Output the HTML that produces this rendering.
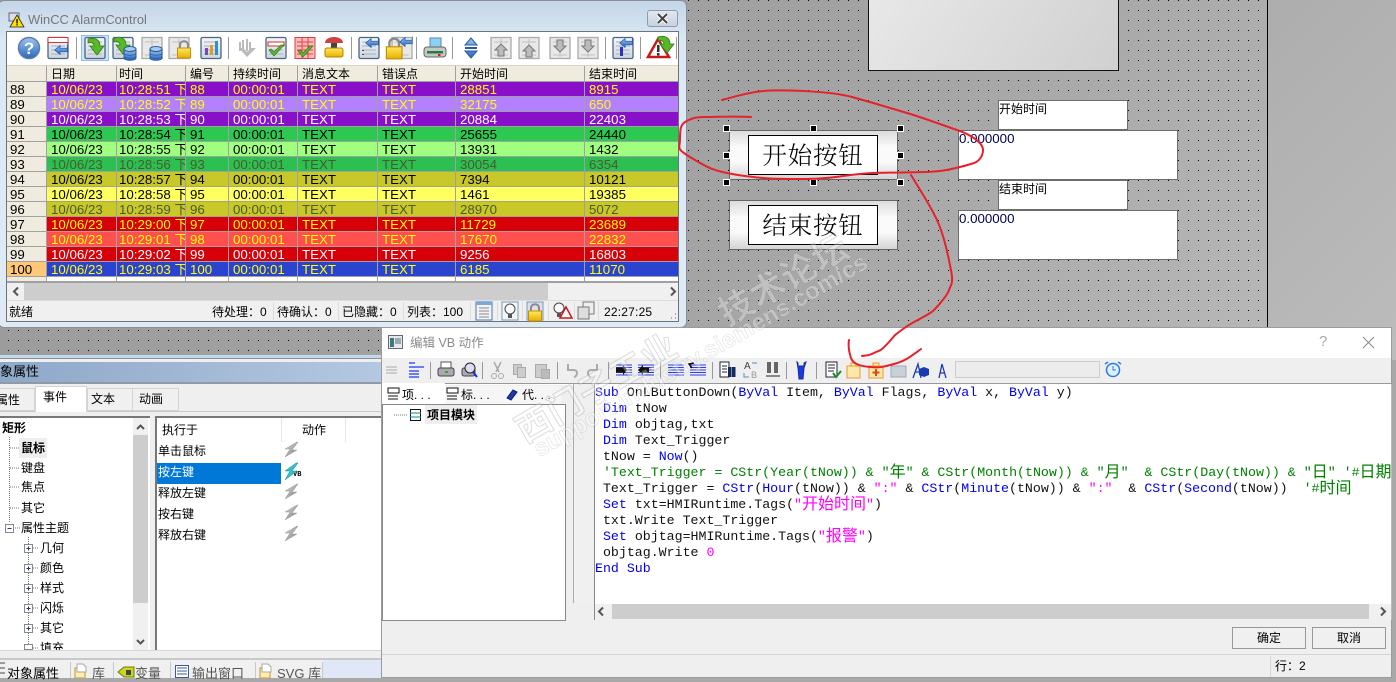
<!DOCTYPE html>
<html><head><meta charset="utf-8"><style>
html,body{margin:0;padding:0;background:#a8a8a8}
body{position:relative;width:1396px;height:678px;overflow:hidden;font:12px "Liberation Sans","WenQuanYi Zen Hei","Noto Sans CJK SC",sans-serif;color:#000}
.a{position:absolute}
.t{position:absolute;white-space:nowrap;line-height:16px}
.row{position:absolute;left:7px;width:671px;height:15px;display:grid;grid-template-columns:40px 70px 69px 43px 69px 80px 78px 129px 93px;font-size:13.3px;line-height:15px}
.row span{overflow:hidden;white-space:nowrap;padding-left:4px;border-right:1px solid #a0a0a0;border-bottom:1px solid #a0a0a0;box-sizing:border-box}
.row span:first-child{background:#efebde;color:#000;padding-left:3px}
.row span:nth-child(3){padding-left:2px}
.row span:last-child{border-right:0}
.hd{font-size:12px;background:#efebde;top:66px;height:16px;line-height:16px}
.hd span{padding-left:4px}
.w{color:#fff}.y{color:#ff0}.b{color:#000}.g{color:#4a5a30}
.code{position:absolute;left:595px;top:384px;width:796px;height:220px;overflow:hidden;background:#fff;font:13.28px/16px "Liberation Mono",monospace;color:#111}
.code div{position:absolute;left:0;margin-top:1px;white-space:pre;height:16px}
.code i{font-style:normal;color:#0000ee}.code u{text-decoration:none;color:#ff00ff}.code em{font-style:normal;color:#008000}
.code b{font:16px/0 "WenQuanYi Zen Hei","Noto Sans CJK SC",sans-serif;vertical-align:-1px}
.btn{position:absolute;width:72px;height:20px;border:1px solid #999;background:#f0f0f0;text-align:center;line-height:20px;font-size:12px}
.cbtn{position:absolute;box-sizing:border-box;width:169px;height:50px;left:729px;border:1px solid #666;background:linear-gradient(#dcdcdc,#fafafa 35%,#fafafa 65%,#d4d4d4)}
.cin{position:absolute;left:18px;top:4px;width:130px;height:40px;box-sizing:border-box;border:1px solid #000;background:#fff;text-align:center;font:300 24.5px/37px "Noto Serif CJK SC",serif;letter-spacing:.8px}
.box{position:absolute;box-sizing:border-box;background:#fff;border:1px solid #6c6c6c}
.h{position:absolute;width:5px;height:5px;background:#000;border:1px solid #fff}
</style></head><body>

<!-- design canvas -->
<div class="a" style="left:0;top:0;width:1396px;height:360px;background:linear-gradient(135deg,#989898,#a4a4a4 55%,#bcbcbc)"></div>
<svg class="a" style="left:0;top:0" width="1268" height="360"><defs><pattern id="d" x="8" y="0" width="10" height="10" patternUnits="userSpaceOnUse"><rect width="1" height="1" fill="#000"/></pattern></defs><rect width="1268" height="356" fill="url(#d)"/></svg>
<div class="a" style="left:1267px;top:0;width:1px;height:328px;background:#000"></div>
<div class="a" style="left:868px;top:-2px;width:251px;height:73px;box-sizing:border-box;border:1px solid #111;background:linear-gradient(125deg,#e8e8e8,#d0d0d0)"></div>

<div class="cbtn" style="top:130px"><div class="cin">开始按钮</div></div>
<div class="cbtn" style="top:200px"><div class="cin">结束按钮</div></div>
<div class="h" style="left:723px;top:125px"></div><div class="h" style="left:810px;top:125px"></div><div class="h" style="left:897px;top:125px"></div>
<div class="h" style="left:723px;top:152px"></div><div class="h" style="left:897px;top:152px"></div>
<div class="h" style="left:723px;top:179px"></div><div class="h" style="left:810px;top:179px"></div><div class="h" style="left:897px;top:179px"></div>

<div class="box" style="left:998px;top:100px;width:130px;height:30px"><span class="t" style="left:0;top:0">开始时间</span></div>
<div class="box" style="left:958px;top:130px;width:220px;height:50px"><span class="t" style="left:0;top:0;font-size:13.3px;color:#000050">0.000000</span></div>
<div class="box" style="left:998px;top:180px;width:130px;height:30px"><span class="t" style="left:0;top:0">结束时间</span></div>
<div class="box" style="left:958px;top:210px;width:220px;height:50px"><span class="t" style="left:0;top:0;font-size:13.3px;color:#000050">0.000000</span></div>

<!-- alarm window -->
<div class="a" style="left:-2px;top:0;width:689px;height:328px;box-sizing:border-box;border:1px solid #8a8f95;border-radius:6px;background:linear-gradient(#c4d6e8,#dbe8f4 12%,#dfeaf5)"></div>
<svg class="a" style="left:8px;top:12px" width="18" height="16"><rect x="1" y="1" width="10" height="8" fill="#dde" stroke="#667"/><path d="M9 3L16 15H2Z" fill="#ffe000" stroke="#222" stroke-width=".8"/><rect x="8.4" y="7" width="1.3" height="4.5"/><rect x="8.4" y="12.2" width="1.3" height="1.3"/></svg>
<div class="t" style="left:28px;top:12px;font-size:12.9px;color:#777">WinCC AlarmControl</div>
<div class="a" style="left:647px;top:10px;width:31px;height:17px;box-sizing:border-box;border:1px solid #8b9bb0;border-radius:3px;background:linear-gradient(#e2e8ef,#c6d2de)"></div>
<svg class="a" style="left:655px;top:12px" width="15" height="13"><path d="M3 2L12 11M12 2L3 11" stroke="#fff" stroke-width="4"/><path d="M3 2L12 11M12 2L3 11" stroke="#444" stroke-width="2"/></svg>
<div class="a" style="left:6px;top:31px;width:673px;height:291px;box-sizing:border-box;border:1px solid #6e7378;background:#fff"></div>
<div class="a" style="left:7px;top:65px;width:671px;height:1px;background:#d8d4c8"></div>
<div class="a" style="left:81px;top:35px;width:28px;height:26px;box-sizing:border-box;background:#cfe4f8;border:1px solid #8fbfe8"></div>

<div class="row hd"><span></span><span>日期</span><span>时间</span><span>编号</span><span>持续时间</span><span>消息文本</span><span>错误点</span><span>开始时间</span><span>结束时间</span></div>
<div class="row y" style="top:82px;background:#8810c8"><span>88</span><span>10/06/23</span><span>10:28:51 下午</span><span>88</span><span>00:00:01</span><span>TEXT</span><span>TEXT</span><span>28851</span><span>8915</span></div>
<div class="row y" style="top:97px;background:#b380ff"><span>89</span><span>10/06/23</span><span>10:28:52 下午</span><span>89</span><span>00:00:01</span><span>TEXT</span><span>TEXT</span><span>32175</span><span>650</span></div>
<div class="row w" style="top:112px;background:#8810c8"><span>90</span><span>10/06/23</span><span>10:28:53 下午</span><span>90</span><span>00:00:01</span><span>TEXT</span><span>TEXT</span><span>20884</span><span>22403</span></div>
<div class="row b" style="top:127px;background:#2cc850"><span>91</span><span>10/06/23</span><span>10:28:54 下午</span><span>91</span><span>00:00:01</span><span>TEXT</span><span>TEXT</span><span>25655</span><span>24440</span></div>
<div class="row b" style="top:142px;background:#a0ff80"><span>92</span><span>10/06/23</span><span>10:28:55 下午</span><span>92</span><span>00:00:01</span><span>TEXT</span><span>TEXT</span><span>13931</span><span>1432</span></div>
<div class="row g" style="top:157px;background:#2cc050"><span>93</span><span>10/06/23</span><span>10:28:56 下午</span><span>93</span><span>00:00:01</span><span>TEXT</span><span>TEXT</span><span>30054</span><span>6354</span></div>
<div class="row b" style="top:172px;background:#c8c828"><span>94</span><span>10/06/23</span><span>10:28:57 下午</span><span>94</span><span>00:00:01</span><span>TEXT</span><span>TEXT</span><span>7394</span><span>10121</span></div>
<div class="row b" style="top:187px;background:#ffff60"><span>95</span><span>10/06/23</span><span>10:28:58 下午</span><span>95</span><span>00:00:01</span><span>TEXT</span><span>TEXT</span><span>1461</span><span>19385</span></div>
<div class="row g" style="top:202px;background:#c8c828"><span>96</span><span>10/06/23</span><span>10:28:59 下午</span><span>96</span><span>00:00:01</span><span>TEXT</span><span>TEXT</span><span>28970</span><span>5072</span></div>
<div class="row y" style="top:217px;background:#d80008"><span>97</span><span>10/06/23</span><span>10:29:00 下午</span><span>97</span><span>00:00:01</span><span>TEXT</span><span>TEXT</span><span>11729</span><span>23689</span></div>
<div class="row y" style="top:232px;background:#ff5050"><span>98</span><span>10/06/23</span><span>10:29:01 下午</span><span>98</span><span>00:00:01</span><span>TEXT</span><span>TEXT</span><span>17670</span><span>22832</span></div>
<div class="row w" style="top:247px;background:#d80008"><span>99</span><span>10/06/23</span><span>10:29:02 下午</span><span>99</span><span>00:00:01</span><span>TEXT</span><span>TEXT</span><span>9256</span><span>16803</span></div>
<div class="row y" style="top:262px;background:#2a44d0"><span style="background:#ffc878">100</span><span>10/06/23</span><span>10:29:03 下午</span><span>100</span><span>00:00:01</span><span>TEXT</span><span>TEXT</span><span>6185</span><span>11070</span></div>
<div class="row b" style="top:277px;height:5px;background:#fff"><span></span><span></span><span></span><span></span><span></span><span></span><span></span><span></span><span></span></div>

<div class="a" style="left:7px;top:282px;width:671px;height:18px;background:#f0f0f0;border-top:1px solid #a0a0a0;box-sizing:border-box"></div>
<div class="a" style="left:24px;top:283px;width:524px;height:17px;background:#cdcdcd"></div>
<svg class="a" style="left:7px;top:283px" width="671" height="17"><path d="M11 4.500L7 8.500L11 12.500M664 4.500L668 8.500L664 12.500" fill="none" stroke="#555" stroke-width="2"/></svg>
<div class="a" style="left:7px;top:300px;width:671px;height:21px;background:#f0f0f0;border-top:1px solid #ddd;box-sizing:border-box"></div>
<div class="t" style="left:9px;top:304px">就绪</div>
<div class="t" style="left:212px;top:304px">待处理：0</div>
<div class="t" style="left:277px;top:304px">待确认：0</div>
<div class="t" style="left:342px;top:304px">已隐藏：0</div>
<div class="t" style="left:407px;top:304px">列表：100</div>
<div class="t" style="left:604px;top:304px;letter-spacing:.2px">22:27:25</div>

<!-- lower-left properties panel -->
<div class="a" style="left:0;top:355px;width:381px;height:323px;background:#efefef"></div>
<div class="a" style="left:0;top:355px;width:381px;height:3px;background:#c4d8ec;border-bottom:1px solid #8a9098"></div>
<div class="a" style="left:0;top:362px;width:381px;height:20px;background:linear-gradient(90deg,#8ea8c8,#b4c8e0)"></div>
<div class="a" style="left:0;top:382px;width:381px;height:2px;background:#8f9aa8"></div>
<div class="t" style="left:0;top:364px;font-size:13px;color:#000">象属性</div>
<div class="a" style="left:0;top:411px;width:381px;height:1px;background:#c8c8c8"></div>
<div class="a" style="left:-2px;top:388px;width:37px;height:23px;box-sizing:border-box;border:1px solid #d4d4d4;background:#f0f0f0"></div>
<div class="a" style="left:87px;top:388px;width:46px;height:23px;box-sizing:border-box;border:1px solid #d4d4d4;background:#f0f0f0"></div>
<div class="a" style="left:132px;top:388px;width:47px;height:23px;box-sizing:border-box;border:1px solid #d4d4d4;background:#f0f0f0"></div>
<div class="a" style="left:35px;top:386px;width:52px;height:26px;box-sizing:border-box;border:1px solid #d4d4d4;border-bottom:0;background:#fff"></div>
<div class="t" style="left:-4px;top:392px;width:36px">属性</div>
<div class="t" style="left:43px;top:389px">事件</div>
<div class="t" style="left:91px;top:391px">文本</div>
<div class="t" style="left:139px;top:391px">动画</div>

<div class="a" style="left:0;top:416px;width:150px;height:234px;background:#fff;border-top:2px solid #777;box-sizing:border-box"></div>
<div class="a" style="left:155px;top:416px;width:226px;height:234px;background:#fff;border-top:2px solid #777;border-left:2px solid #777;box-sizing:border-box"></div>
<div class="a" style="left:133px;top:418px;width:15px;height:232px;background:#f0f0f0"></div>
<div class="a" style="left:133px;top:435px;width:15px;height:168px;background:#cdcdcd"></div>
<div class="a" style="left:19px;top:438px;width:28px;height:20px;background:#eee"></div>
<div class="a" style="left:157px;top:463px;width:124px;height:21px;background:#0078d7"></div>
<div class="a" style="left:281px;top:418px;width:1px;height:24px;background:#e4e4e4"></div>
<div class="a" style="left:345px;top:418px;width:1px;height:24px;background:#e4e4e4"></div>
<div class="a" style="left:0;top:650px;width:381px;height:1px;background:#d8d8d8"></div>
<div class="a" style="left:0;top:658px;width:381px;height:2px;background:#c8c8c8"></div>

<div class="a" style="left:0;top:418px;width:133px;height:232px;overflow:hidden">
<div class="t" style="left:2px;top:2px;font-weight:bold">矩形</div>
<div class="t" style="left:21px;top:22px;font-weight:bold">鼠标</div>
<div class="t" style="left:21px;top:42px">键盘</div>
<div class="t" style="left:21px;top:61px">焦点</div>
<div class="t" style="left:21px;top:82px">其它</div>
<div class="t" style="left:21px;top:102px">属性主题</div>
<div class="t" style="left:40px;top:122px">几何</div>
<div class="t" style="left:40px;top:142px">颜色</div>
<div class="t" style="left:40px;top:162px">样式</div>
<div class="t" style="left:40px;top:182px">闪烁</div>
<div class="t" style="left:40px;top:202px">其它</div>
<div class="t" style="left:40px;top:222px">填充</div>
</div>
<div class="t" style="left:162px;top:422px">执行于</div>
<div class="t" style="left:302px;top:422px">动作</div>
<div class="t" style="left:158px;top:443px">单击鼠标</div>
<div class="t" style="left:158px;top:464px;color:#fff">按左键</div>
<div class="t" style="left:158px;top:485px">释放左键</div>
<div class="t" style="left:158px;top:506px">按右键</div>
<div class="t" style="left:158px;top:527px">释放右键</div>
<div class="t" style="left:293px;top:467px;font:bold 7px/16px 'Liberation Mono',monospace">VB</div>

<!-- bottom tabs -->
<div class="a" style="left:0;top:660px;width:381px;height:18px;background:#f0f0f0"></div>
<div class="a" style="left:323px;top:660px;width:58px;height:18px;background:#e0e8f8"></div>
<div class="t" style="left:7px;top:666px;font-size:13px">对象属性</div>
<div class="t" style="left:92px;top:666px;font-size:13px;color:#555">库</div>
<div class="t" style="left:135px;top:666px;font-size:13px;color:#555">变量</div>
<div class="t" style="left:192px;top:666px;font-size:13px;color:#555">输出窗口</div>
<div class="t" style="left:277px;top:666px;font-size:13px;color:#555">SVG 库</div>

<!-- VB dialog -->
<div class="a" style="left:381px;top:327px;width:1011px;height:351px;box-sizing:border-box;border:1px solid #9a9aa0;background:#efefef"></div>
<div class="a" style="left:382px;top:328px;width:1009px;height:30px;background:#fff"></div>
<div class="a" style="left:382px;top:383px;width:1009px;height:1px;background:#999"></div>
<div class="a" style="left:382px;top:384px;width:1009px;height:1px;background:#fff"></div>
<svg class="a" style="left:388px;top:335px" width="16" height="15"><rect x=".5" y=".5" width="14" height="13" fill="#e8e8e8" stroke="#667"/><rect x="2" y="3" width="4" height="9" fill="#3a7a7a"/><rect x="7" y="3" width="6" height="6" fill="#9ab"/></svg>
<div class="t" style="left:410px;top:335px;color:#8a8a8a;font-size:12.5px">编辑 VB 动作</div>
<div class="t" style="left:1319px;top:334px;font-size:15px;color:#aaa">?</div>
<svg class="a" style="left:1362px;top:336px" width="13" height="13"><path d="M1 1L12 12M12 1L1 12" stroke="#888"/></svg>
<div class="a" style="left:955px;top:361px;width:145px;height:17px;box-sizing:border-box;border:1px solid #ccc;background:#ececec"></div>

<div class="a" style="left:382px;top:383px;width:63px;height:21px;background:#fff"></div>
<div class="a" style="left:445px;top:386px;width:58px;height:18px;background:#f6f6f6;border-right:1px solid #ddd"></div>
<div class="a" style="left:503px;top:386px;width:58px;height:18px;background:#f6f6f6"></div>
<div class="t" style="left:402px;top:387px;font-size:12px">项. . .</div>
<div class="t" style="left:461px;top:387px;font-size:12px">标. . .</div>
<div class="t" style="left:522px;top:387px;font-size:12px">代. . .</div>
<div class="a" style="left:382px;top:404px;width:184px;height:217px;box-sizing:border-box;border:1px solid #888;background:#fff"></div>
<div class="a" style="left:425px;top:405px;width:52px;height:19px;background:#eee"></div>
<div class="t" style="left:427px;top:407px;font-weight:bold">项目模块</div>
<div class="a" style="left:573px;top:384px;width:21px;height:219px;background:#f0f0f0;border-left:1px solid #aaa;box-sizing:border-box"></div>
<div class="a" style="left:594px;top:384px;width:1px;height:236px;background:#888"></div>

<div class="code">
<div style="top:0"><i>Sub</i> OnLButtonDown(<i>ByVal</i> Item, <i>ByVal</i> Flags, <i>ByVal</i> x, <i>ByVal</i> y)</div>
<div style="top:16px"> <i>Dim</i> tNow</div>
<div style="top:32px"> <i>Dim</i> objtag,txt</div>
<div style="top:48px"> <i>Dim</i> Text_Trigger</div>
<div style="top:64px"> tNow = <i>Now</i>()</div>
<div style="top:80px"> <em>'Text_Trigger = CStr(Year(tNow)) &amp; "<b>年</b>" &amp; CStr(Month(tNow)) &amp; "<b>月</b>"  &amp; CStr(Day(tNow)) &amp; "<b>日</b>" '#<b>日期</b></em></div>
<div style="top:96px"> Text_Trigger = <i>CStr</i>(<i>Hour</i>(tNow)) &amp; <u>":"</u> &amp; <i>CStr</i>(<i>Minute</i>(tNow)) &amp; <u>":"</u>  &amp; <i>CStr</i>(<i>Second</i>(tNow))  <em>'#<b>时间</b></em></div>
<div style="top:112px"> <i>Set</i> txt=HMIRuntime.Tags(<u>"<b>开始时间</b>"</u>)</div>
<div style="top:128px"> txt.Write Text_Trigger</div>
<div style="top:144px"> <i>Set</i> objtag=HMIRuntime.Tags(<u>"<b>报警</b>"</u>)</div>
<div style="top:160px"> objtag.Write <u>0</u></div>
<div style="top:176px"><i>End Sub</i></div>
</div>
<div class="a" style="left:595px;top:604px;width:796px;height:16px;background:#f0f0f0"></div>
<div class="a" style="left:612px;top:604px;width:757px;height:15px;background:#cdcdcd"></div>
<svg class="a" style="left:595px;top:604px" width="796" height="16"><path d="M8 3.500L4 7.500L8 11.500M786 3.500L790 7.500L786 11.500" fill="none" stroke="#555" stroke-width="2"/></svg>
<div class="a" style="left:1391px;top:384px;width:1px;height:236px;background:#bbb"></div>
<div class="btn" style="left:1232px;top:627px">确定</div>
<div class="btn" style="left:1312px;top:627px">取消</div>
<div class="a" style="left:382px;top:654px;width:1009px;height:1px;background:#d4d4d4"></div>
<div class="a" style="left:1270px;top:656px;width:1px;height:21px;background:#d4d4d4"></div>
<div class="t" style="left:1275px;top:658px">行：2</div>

<!-- icons and tree lines -->
<svg class="a" style="left:0;top:0;pointer-events:none" width="1396" height="678" viewBox="0 0 1396 678">
<defs>
<linearGradient id="gd" x1="0" y1="0" x2="0" y2="1"><stop offset="0" stop-color="#f4f6f9"/><stop offset="1" stop-color="#cfd6de"/></linearGradient>
<linearGradient id="gy" x1="0" y1="0" x2="0" y2="1"><stop offset="0" stop-color="#ffe860"/><stop offset="1" stop-color="#e8b000"/></linearGradient>
<linearGradient id="gb" x1="0" y1="0" x2="0" y2="1"><stop offset="0" stop-color="#9cc4f0"/><stop offset="1" stop-color="#2a68c0"/></linearGradient>
<linearGradient id="gs" x1="0" y1="0" x2="1" y2="1"><stop offset="0" stop-color="#e0e0e0"/><stop offset="1" stop-color="#777"/></linearGradient>
<g id="doc"><rect x="-10" y="-10.500" width="20" height="21" rx="1.500" fill="url(#gd)" stroke="#4a6484" stroke-width="1.300"/><path d="M-7-6H7M-7-2H7M-7 2H7M-7 6H7" stroke="#a8b0ba"/></g>
<g id="gdoc"><rect x="-10" y="-10.500" width="20" height="21" fill="#e8e8e8" stroke="#aaa" stroke-width="1.300"/><path d="M-7-6H7M-7 7H7M0-9V9" stroke="#c0c0c0"/></g>
<path id="ga" d="M-7-9C-1-11 5-9 5-2H9L2 7-5-2H-1C-1-5-4-6-7-5Z" fill="#58b828" stroke="#2c7a14" stroke-width=".8"/>
<g id="db"><path d="M-6-3V6C-6 9 6 9 6 6V-3Z" fill="url(#gb)" stroke="#2a5a9a"/><ellipse cy="-3" rx="6" ry="2.500" fill="#a8ccf0" stroke="#2a5a9a"/><path d="M-6 1C-6 4 6 4 6 1M-6 4C-6 7 6 7 6 4" fill="none" stroke="#2a5a9a" stroke-width=".7"/></g>
<g id="lk"><path d="M-4 0V-4C-4-9 4-9 4-4V0" fill="none" stroke="#8a8a8a" stroke-width="2"/><rect x="-6.500" y="-1" width="13" height="10" fill="url(#gy)" stroke="#c89000"/></g>
<path id="ba" d="M7-6V-2H-1V-5L-7 0-1 5V2H7Z" transform="scale(.9)" fill="url(#gb)" stroke="#1f58b0" stroke-width=".8"/>
<path id="ck" d="M-7 0L-2 6 8-5 5-5-2 2-5-1Z" fill="#60b830" stroke="#2c7a14" stroke-width=".7"/>
<path id="gu" d="M0-6L6 0H3V6H-3V0H-6Z" fill="#bbb" stroke="#777"/>
<path id="gdn" d="M0 6L6 0H3V-6H-3V0H-6Z" fill="#bbb" stroke="#777"/>
<path id="bolt" d="M6-8L-6-1H-1L-6 7 6 0H1L7-8Z M3-8" fill="url(#gs)" stroke="#999" stroke-width=".5"/>
<g id="ll"><path d="M-8-5H8M-8-2.500H8M-8 0H8M-8 2.500H8M-8 5H8" stroke="#2a3aee"/></g>
</defs>

<!-- alarm toolbar -->
<g transform="translate(29 48)"><circle r="10.500" fill="url(#gb)" stroke="#5a7aa8" stroke-width="1.500"/><text x="0" y="6" text-anchor="middle" font-family="Liberation Sans" font-size="17" font-weight="bold" fill="#fff">?</text></g>
<g transform="translate(58 48)"><use href="#doc"/><rect x="-10" y="-10.500" width="20" height="5" fill="#fff" stroke="#e03030"/><use href="#ba" x="3" y="2"/></g>
<path d="M76.500 37V59M228.500 37V59M351.500 37V59M416.500 37V59M452.500 37V59M605.500 37V59M640.500 37V59M676.500 37V59" stroke="#999"/>
<g transform="translate(95 48)"><use href="#doc"/><use href="#ga"/></g>
<g transform="translate(124 48)"><use href="#doc" x="-1"/><use href="#ga" x="-3" y="-1"/><use href="#db" x="6" y="4"/></g>
<g transform="translate(153 48)"><use href="#gdoc" x="-1"/><use href="#db" x="3" y="4"/></g>
<g transform="translate(181 48)"><use href="#gdoc" x="-2"/><use href="#lk" x="3" y="1"/></g>
<g transform="translate(211 48)"><use href="#doc"/><rect x="-6" y="0" width="3" height="7" fill="#7a4ab0"/><rect x="-1" y="-3" width="3" height="10" fill="#e89a20"/><rect x="4" y="-7" width="3" height="14" fill="#2a90d0"/></g>
<g transform="translate(247 48)"><path d="M-7-6V3M-4-8V3M0-9V3M3-6V3" stroke="#bbb" stroke-width="2"/><path d="M-8 0L0 9 9 0H4L0 4-4 0Z" fill="#bbb"/></g>
<g transform="translate(276 48)"><use href="#doc"/><rect x="-8" y="-6" width="16" height="4" fill="#fff" stroke="#d03030"/><use href="#ck" y="2"/></g>
<g transform="translate(305 48)"><rect x="-10" y="-10.500" width="20" height="21" fill="#fbb" stroke="#d04040"/><path d="M-8-6H8M-8-2H8M-8 2H8M-8 6H8M-3-10V10M3-10V10" stroke="#e04040"/><use href="#ck" y="3"/></g>
<g transform="translate(334 48)"><path d="M-9-5C-9-13 9-13 9-5Z" fill="#d04040"/><rect x="-3" y="-5" width="6" height="5" fill="#444"/><rect x="-9" y="0" width="18" height="9" rx="2" fill="url(#gy)" stroke="#b88000"/></g>
<g transform="translate(369 48)"><use href="#doc"/><use href="#ba" x="3" y="-5"/><path d="M-6 2V3M-6 6V7" stroke="#555" stroke-width="2"/></g>
<g transform="translate(399 48)"><use href="#gdoc" x="3"/><use href="#lk" x="-4" y="0" transform="scale(1.200)"/><use href="#ba" x="7" y="-6"/></g>
<g transform="translate(435 49)"><rect x="-5" y="-11" width="11" height="12" fill="#8cd0f4" stroke="#5a8ab8"/><rect x="-11" y="-2" width="22" height="10" rx="3" fill="#c4c8c8" stroke="#666"/><rect x="-8" y="2" width="16" height="2.500" fill="#2a7a3a"/><rect x="3" y="5" width="2.500" height="2" fill="#e02020"/></g>
<g transform="translate(471 48)"><path d="M0-10L6-3H-6ZM0 10L6 3H-6Z" fill="url(#gb)" stroke="#2a5aa0"/><path d="M-6 0H6" stroke="#2a5aa0" stroke-width="2"/></g>
<g transform="translate(501 48)"><use href="#gdoc"/><use href="#gu" y="2"/></g>
<g transform="translate(529 48)"><use href="#gdoc"/><use href="#gu" y="3"/></g>
<g transform="translate(560 48)"><use href="#gdoc"/><use href="#gdn" y="-2"/></g>
<g transform="translate(588 48)"><use href="#gdoc"/><use href="#gdn" y="-2"/></g>
<g transform="translate(623 48)"><use href="#doc"/><use href="#ba" x="3" y="-5"/><rect x="-3" y="-1" width="3" height="9" fill="#3030c0"/></g>
<g transform="translate(660 48)"><path d="M-2-9L9 9H-12Z" fill="#fff" stroke="#c81818" stroke-width="2.500"/><rect x="-3" y="-3" width="2.500" height="7" fill="#333"/><rect x="-3" y="5" width="2.500" height="2.500" fill="#333"/><use href="#ga" x="5" y="-2"/></g>

<!-- status icons -->
<g transform="translate(484 311)"><rect x="-8" y="-9" width="16" height="18" fill="#f4f4f8" stroke="#4a78b0"/><rect x="-8" y="-9" width="16" height="3" fill="#7aa8dc"/><path d="M-5-3H5M-5 0H5M-5 3H5M-5 6H5" stroke="#888"/></g>
<g transform="translate(510 311)"><rect x="-8" y="-9" width="16" height="18" fill="#f4f8f8" stroke="#7a9ab8"/><circle cy="-2" r="5" fill="#f8f8f8" stroke="#444"/><rect x="-2" y="3" width="4" height="4" fill="#555"/></g>
<g transform="translate(535 311)"><rect x="-8" y="-9" width="16" height="18" fill="#dde" stroke="#7a9ab8"/><use href="#lk" y="1"/></g>
<g transform="translate(562 311)"><circle cx="-3" cy="-3" r="5" fill="#f8f8f8" stroke="#444"/><rect x="-5" y="2" width="4" height="4" fill="#555"/><path d="M4-4L10 7H-2Z" fill="#fff" stroke="#c81818" stroke-width="1.500"/></g>
<g transform="translate(586 311)"><rect x="-3" y="-9" width="11" height="12" fill="#eee" stroke="#777"/><rect x="-8" y="-4" width="11" height="12" fill="#ddd" stroke="#777"/></g>
<path d="M273.500 302V320M338.500 302V320M403.500 302V320M470.500 302V320M497.500 302V320M522.500 302V320M548.500 302V320M574.500 302V320M598.500 302V320" stroke="#ddd"/>
<path d="M671 318h1M675 318h1M675 314h1" stroke="#aaa" stroke-width="2"/>

<!-- left tree -->
<g stroke="#777" stroke-dasharray="1 1" fill="none">
<path d="M9.500 437V522M10 448H19M10 468H19M10 487H19M10 508H19M15 528H20M28.500 537V650M33 548H38M33 568H38M33 588H38M33 608H38M33 628H38M33 648H38M394 415H408"/>
</g>
<g fill="#fff" stroke="#888"><rect x="5.500" y="524.500" width="8" height="8"/><rect x="24.500" y="544.500" width="8" height="8"/><rect x="24.500" y="564.500" width="8" height="8"/><rect x="24.500" y="584.500" width="8" height="8"/><rect x="24.500" y="604.500" width="8" height="8"/><rect x="24.500" y="624.500" width="8" height="8"/><rect x="24.500" y="644.500" width="8" height="5"/></g>
<path d="M7.500 528.500H11.500M26.500 548.500H30.500M28.500 546.500V550.500M26.500 568.500H30.500M28.500 566.500V570.500M26.500 588.500H30.500M28.500 586.500V590.500M26.500 608.500H30.500M28.500 606.500V610.500M26.500 628.500H30.500M28.500 626.500V630.500" stroke="#223a8a"/>
<path d="M137 429L140.500 425.500 144 429M137 640L140.500 643.500 144 640" fill="none" stroke="#555" stroke-width="2"/>
<use href="#bolt" x="291" y="450"/><use href="#bolt" x="291" y="492"/><use href="#bolt" x="291" y="513"/><use href="#bolt" x="291" y="534"/>
<path d="M296 463L285 471H290L285 480 297 471H292L298 463Z" fill="#38c0c8" stroke="#1a8a98" stroke-width=".5"/>

<!-- bottom tab icons -->
<g><path d="M70.500 662V678M113.500 662V678M170.500 662V678M255.500 662V678M322.500 662V678" stroke="#c8c8c8"/>
<path d="M-1 663H5M-1 668H5M-1 673H5" stroke="#445"/>
<path d="M75 668H85V678H75Z" fill="#ffeeb0" stroke="#c89030"/><path d="M77 664H83L86 667V672H77Z" fill="#fff" stroke="#aaa"/>
<path d="M118 672L124 667H134V677H124Z" fill="#c8d820" stroke="#6a7a10"/><rect x="126" y="670" width="5" height="5" fill="#444"/>
<rect x="175.500" y="665.500" width="13" height="12" fill="#fff" stroke="#3a5a9a"/><path d="M177 668H187M177 671H187M177 674H187" stroke="#3a5a9a"/>
<path d="M260 668H270V678H260Z" fill="#ffeeb0" stroke="#c89030"/><path d="M262 664H268L271 667V672H262Z" fill="#fff" stroke="#aaa"/></g>

<!-- dialog tabs icons -->
<g stroke="#111"><path d="M388 388H399V393H388ZM388 396H398M388 399H398" fill="#fff"/><path d="M447 388H458V393H447ZM447 396H457M447 399H457" fill="#fff"/><rect x="410.500" y="409.500" width="10" height="11" fill="#fff"/><path d="M410 413H421M410 417H421" stroke="#0a8a8a"/></g>
<path d="M507 398L513 390 517 392 511 400Z" fill="#1a3ab0" stroke="#0a1a70"/>

<!-- dialog toolbar -->
<path d="M386 367H397M386 370H397M386 373H397" stroke="#aaa"/>
<path d="M409 363H415M409 367H424M409 371H419M409 374H419M409 377H419" stroke="#1a3aee" stroke-width="1.200"/>
<path d="M430.500 362V379M482.500 362V379M557.500 362V379M608.500 362V379M660.500 362V379M712.500 362V379M786.500 362V379M816.500 362V379" stroke="#999"/>
<g transform="translate(446 370)"><rect x="-5" y="-8" width="10" height="7" fill="#fff" stroke="#556"/><rect x="-8" y="-2" width="16" height="8" rx="2" fill="#aaa" stroke="#445"/><rect x="-1" y="1" width="3" height="2" fill="#3a3"/></g>
<g transform="translate(468 370)"><rect x="-6" y="-2" width="13" height="8" rx="2" fill="#aaa" stroke="#445"/><circle cx="2" cy="-2" r="5" fill="#dde" stroke="#223"/><path d="M5 2L9 7" stroke="#1a2ae0" stroke-width="2"/></g>
<g stroke="#aaa" fill="#ccc"><path d="M494 362L499 372M501 362L496 372" fill="none" stroke-width="1.500"/><circle cx="494" cy="376" r="2.500" fill="none"/><circle cx="501" cy="376" r="2.500" fill="none"/><rect x="513.500" y="364.500" width="8" height="10"/><rect x="517.500" y="367.500" width="8" height="10"/><rect x="535.500" y="364.500" width="11" height="13"/><rect x="541.500" y="369.500" width="8" height="9" fill="#bbb"/></g>
<g fill="none" stroke="#aaa" stroke-width="2"><path d="M568 364V370H574C578 370 578 376 574 377M597 364V370H591C587 370 587 376 591 377"/></g>
<g transform="translate(624 370)"><use href="#ll"/><path d="M-8-2.500H-1V-5L3 0-1 5V2.500H-8Z" fill="#111"/></g>
<g transform="translate(646 370)"><use href="#ll"/><path d="M3-2.500H-3V-5L-8 0-3 5V2.500H3Z" fill="#111"/></g>
<g transform="translate(676 370)"><use href="#ll"/></g>
<g transform="translate(698 370)"><use href="#ll"/><path d="M-6-2L-9-6-4-7" fill="none" stroke="#111" stroke-width="1.500"/></g>
<g transform="translate(727 370)"><rect x="-7" y="-8" width="9" height="15" fill="#fff" stroke="#223"/><path d="M-5-4H0M-5-1H0M-5 2H0" stroke="#223"/><rect x="1" y="-3" width="3.500" height="10" fill="#112a60"/><rect x="5" y="-3" width="3.500" height="10" fill="#112a60"/></g>
<text x="744" y="369" font-family="Liberation Sans" font-size="10" fill="#444">A</text><text x="751" y="378" font-family="Liberation Sans" font-size="9" fill="#999">B</text>
<path d="M752 363L757 363M744 373V377H749" fill="none" stroke="#5a8ac8"/>
<g transform="translate(773 370)"><rect x="-6" y="-8" width="4" height="11" fill="#666"/><rect x="1" y="-8" width="4" height="11" fill="#666"/><path d="M-7 6H7" stroke="#888" stroke-width="2"/></g>
<path d="M797 362L798 368 799 379H803L804 368 806 362 804 363 804 366H798L798 363Z" fill="#1a3ae0" stroke="#1a2aa0"/>
<g transform="translate(833 370)"><rect x="-7" y="-8" width="11" height="15" fill="#fff" stroke="#223"/><path d="M-5-5H2M-5-2H2M-5 1H1" stroke="#223"/><path d="M0 3L3 7 8 1" fill="none" stroke="#1a8a2a" stroke-width="2"/></g>
<path d="M847 366H860V378H847Z M851 366V363H856V366" fill="#ffe8b0" stroke="#e89a28"/>
<path d="M869 366H883V378H869Z M873 366V363H879V366" fill="#ffe8b0" stroke="#e89a28"/><path d="M876 369V376M872.500 372.500H879.500" stroke="#d84a10" stroke-width="2"/>
<rect x="891" y="366" width="15" height="11" fill="#c8d0d8" stroke="#9aa8b8"/>
<g fill="none" stroke="#1a3ab0"><path d="M913 378L918 364 921 378M939 378L942 364 946 378M915 372H920M940 373H945" stroke-width="1.300"/></g><path d="M924 367L929 369V375L924 377 919 375V369Z" fill="#1a3ab0"/>
<g transform="translate(1113 370)"><circle r="6.500" fill="#dff0ff" stroke="#2a7ae0" stroke-width="1.500"/><path d="M0-4V0H3" stroke="#2a7ae0" fill="none"/><path d="M-8-6L-5-8M8-6L5-8" stroke="#2a7ae0" stroke-width="1.500"/></g>

<!-- red annotations -->
<g fill="none" stroke="#e8202c" stroke-width="2" stroke-linecap="round">
<path d="M722 100C740 95 755 91 771 90.500S830 91 852 97 890 108 907 113 945 126 957 130 983 142 983 150 977 162 974 163 955 169 940 171 900 172 873 173 835 179 805 179 765 179 738 175 705 166 690 157 680 148 680 140 680 125 685 122 695 117 704 117 735 116 751 117"/>
<path d="M911 175C920 190 930 205 937 220S948 255 951 270 950 286 949 290 940 304 934 310 915 320 903 329 898 332 889 342 880 350 874 353 868 355 862 356"/>
<path d="M849 340C848 346 849 352 851 358S860 366 870 367 883 367 894 364 910 357 921 349"/>
</g>
</svg>

<!-- watermark -->
<div class="a" style="left:508px;top:414px;transform-origin:0 0;transform:rotate(-30deg);white-space:nowrap;color:rgba(255,255,255,.3);-webkit-text-stroke:1px rgba(130,130,130,.28);font:bold 35px/40px 'WenQuanYi Zen Hei','Noto Sans CJK SC',sans-serif;letter-spacing:1px">西门子工业&nbsp;&nbsp;&nbsp;&nbsp;&nbsp;&nbsp;技术论坛</div>
<div class="a" style="left:530px;top:441px;transform-origin:0 0;transform:rotate(-30deg);white-space:nowrap;color:rgba(255,255,255,.32);-webkit-text-stroke:.6px rgba(130,130,130,.25);font:bold 24px/24px 'Liberation Sans',sans-serif">support.industry.siemens.com/cs</div>
</body></html>
